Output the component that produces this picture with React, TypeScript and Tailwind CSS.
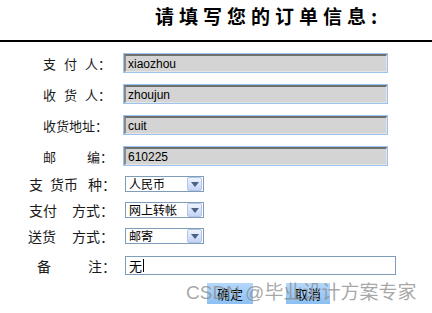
import React from "react";

const cjk = { fontFamily: '"Noto Sans CJK SC", "Noto Sans", sans-serif' };
const latin = { fontFamily: '"Liberation Sans", "Noto Sans CJK SC", sans-serif' };

function GrayInput({ value }: { value: string }) {
  return (
    <div className="w-[265px] h-[20px] border border-[#9cc2ee] flex">
      <div
        className="flex-1 flex items-center bg-[#d4d4d4] border-t-2 border-l-2 border-t-[#6f6f6f] border-l-[#8a8a8a] border-b border-r border-b-[#e4e4e4] border-r-[#e4e4e4] pl-[2px] text-[12px] text-black leading-none"
        style={latin}
      >
        {value}
      </div>
    </div>
  );
}

function Select({ value }: { value: string }) {
  return (
    <div className="w-[79px] h-[16px] border border-[#7f9db9] bg-white flex items-center">
      <span className="flex-1 pl-[3px] text-[12px] leading-none text-black" style={cjk}>
        {value}
      </span>
      <div className="w-[15px] h-[14px] mr-[1px] border border-[#b2c5e8] rounded-[2px] bg-gradient-to-b from-[#eef3fd] to-[#c4d4f6] flex items-center justify-center">
        <svg width="8" height="5" viewBox="0 0 8 5">
          <path d="M0 0 L8 0 L4 5 Z" fill="#4d6185" />
        </svg>
      </div>
    </div>
  );
}

export default function App() {
  return (
    <div className="relative w-[432px] h-[313px] bg-white overflow-hidden text-[#1a1a1a]" style={cjk}>
      {/* Title */}
      <div className="h-[40px] pl-[155px] pt-[3px] flex items-start">
        <span className="text-[19px] font-bold tracking-[5px] text-black leading-[26px] whitespace-nowrap">请填写您的订单信息:</span>
      </div>
      <div className="h-[2px] bg-black" />

      {/* Text rows */}
      <div className="flex flex-col gap-[11px] mt-[11px]">
        <div className="flex items-center h-[20px]">
          <div className="w-[123px] pl-[43px] text-[13px] leading-none flex">
            <span>支</span>
            <span className="ml-[8px]">付</span>
            <span className="ml-[8px]">人</span>
            <span>：</span>
          </div>
          <GrayInput value="xiaozhou" />
        </div>
        <div className="flex items-center h-[20px]">
          <div className="w-[123px] pl-[43px] text-[13px] leading-none flex">
            <span>收</span>
            <span className="ml-[8px]">货</span>
            <span className="ml-[8px]">人</span>
            <span>：</span>
          </div>
          <GrayInput value="zhoujun" />
        </div>
        <div className="flex items-center h-[20px]">
          <div className="w-[123px] pl-[43px] text-[13px] leading-none flex">
            <span>收货地址：</span>
          </div>
          <GrayInput value="cuit" />
        </div>
        <div className="flex items-center h-[20px]">
          <div className="w-[123px] pl-[43px] text-[13px] leading-none flex">
            <span>邮</span>
            <span className="ml-[31px]">编：</span>
          </div>
          <GrayInput value="610225" />
        </div>
      </div>

      {/* Select rows */}
      <div className="flex flex-col gap-[10px] mt-[10px]">
        <div className="flex items-center h-[16px]">
          <div className="w-[125px] pl-[29px] text-[14px] leading-none flex">
            <span>支</span>
            <span className="ml-[7px]">货币</span>
            <span className="ml-[10px]">种：</span>
          </div>
          <Select value="人民币" />
        </div>
        <div className="flex items-center h-[16px]">
          <div className="w-[125px] pl-[29px] text-[14px] leading-none flex">
            <span>支付</span>
            <span className="ml-[15px]">方式：</span>
          </div>
          <Select value="网上转帐" />
        </div>
        <div className="flex items-center h-[16px]">
          <div className="w-[125px] pl-[28px] text-[14px] leading-none flex">
            <span>送货</span>
            <span className="ml-[16px]">方式：</span>
          </div>
          <Select value="邮寄" />
        </div>
      </div>

      {/* Remarks */}
      <div className="flex items-center h-[19px] mt-[12px]">
        <div className="w-[125px] pl-[37px] text-[14px] leading-none flex">
          <span>备</span>
          <span className="ml-[37px]">注：</span>
        </div>
        <div className="w-[271px] h-[19px] border border-[#7f9db9] bg-white flex items-center pl-[3px]">
          <span className="text-[13px] leading-none text-black">无</span>
          <span className="w-px h-[13px] bg-black ml-px" />
        </div>
      </div>

      {/* Buttons */}
      <div className="flex mt-[8px] pl-[207px] gap-[33px]">
        <button className="w-[46px] h-[21px] bg-gradient-to-b from-[#b4d8fb] to-[#8cc0f2] text-[13px] leading-none text-black flex items-center justify-center">
          确定
        </button>
        <button className="w-[44px] h-[21px] bg-gradient-to-b from-[#b4d8fb] to-[#8cc0f2] text-[13px] leading-none text-black flex items-center justify-center">
          取消
        </button>
      </div>

      {/* Watermark */}
      <div
        className="absolute left-[186px] top-[280px] text-[19px] leading-[26px] text-[#8a8a8a]/75 whitespace-nowrap pointer-events-none"
        style={{ fontFamily: '"Liberation Sans", "Noto Sans CJK SC", sans-serif' }}
      >
        CSDN @毕业设计方案专家
      </div>
    </div>
  );
}
